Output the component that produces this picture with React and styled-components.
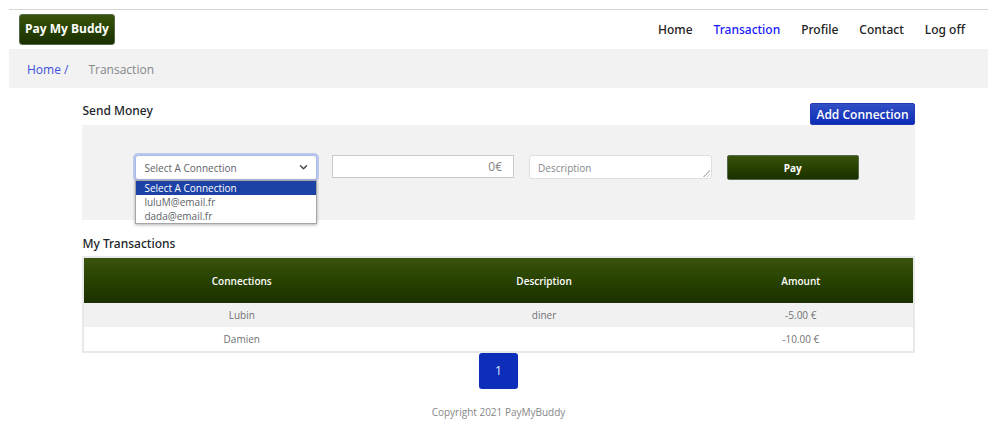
import React from "react";
import styled, { createGlobalStyle, css } from "styled-components";

const GlobalStyle = createGlobalStyle`
  *, *::before, *::after { box-sizing: border-box; }
  body {
    margin: 0;
    background: #fff;
    color: #212529;
    font-family: "Open Sans", "Noto Sans", sans-serif;
    font-size: 12px;
    line-height: 16px;
  }
  button, input, select, textarea { font: inherit; margin: 0; }
`;

const green = css`
  background: linear-gradient(#3a540e, #284200 48%, #1a3000);
  color: #fff;
`;

const Page = styled.div`
  margin: 9px 16px 0 9px;
  border-top: 1px solid #d6d6d6;
`;

const TopBar = styled.header`
  display: flex;
  align-items: center;
  justify-content: space-between;
  height: 39px;
  padding: 0 23px 0 10px;
`;

const Brand = styled.a`
  ${green}
  padding: 6px 5px 7px;
  border: 1px solid #53694a;
  border-radius: 3px;
  font-size: 12px;
  font-weight: 700;
  text-decoration: none;
`;

const NavLinks = styled.nav`
  display: flex;
  gap: 21px;
`;

const NavLink = styled.a`
  color: ${(p) => (p.$active ? "#1a1aff" : "#212121")};
  font-family: "Noto Sans", sans-serif;
  font-size: 12px;
  font-weight: 500;
  text-decoration: none;
`;

const Breadcrumb = styled.nav`
  display: flex;
  align-items: center;
  gap: 20px;
  height: 39px;
  padding: 2px 18px 0;
  background: #f2f2f2;
  color: #858789;
`;

const CrumbLink = styled.a`
  color: #3d51dc;
  text-decoration: none;
`;

const Container = styled.main`
  width: 85%;
  margin: 0 auto;
`;

const SectionHead = styled.div`
  display: flex;
  align-items: flex-start;
  justify-content: space-between;
  padding-top: 15px;
`;

const Title = styled.h2`
  margin: 0;
  font-family: "Noto Sans", sans-serif;
  font-size: 12px;
  line-height: 16px;
  font-weight: 500;
`;

const AddButton = styled.button`
  padding: 3px 5px 1px;
  border: 1px solid #2438b4;
  border-radius: 2px;
  background: linear-gradient(#3150c4, #0d2cb8);
  color: #fff;
  font-weight: 600;
`;

const PayForm = styled.form`
  display: grid;
  grid-template-columns: 181fr 181fr 182fr 131fr;
  gap: 15px;
  align-items: start;
  padding: 30px 56px 40px 53px;
  background: #f2f2f2;
`;

const SelectBox = styled.div`
  position: relative;
  color: #606468;
  font-size: 10px;

  svg {
    position: absolute;
    top: 9px;
    right: 9px;
    pointer-events: none;
  }
`;

const Select = styled.select`
  display: block;
  appearance: none;
  width: 100%;
  height: 25px;
  padding: 0 24px 0 8px;
  border: 1px solid #aab8e6;
  border-radius: 3px;
  outline: none;
  background: #fff;
  color: inherit;
  box-shadow: 0 0 0 2px #bcc7ec;
`;

const Options = styled.ul`
  position: absolute;
  z-index: 1;
  top: 100%;
  left: 0;
  right: 0;
  margin: 0;
  padding: 0;
  border: 1px solid #a6a6a6;
  background: #fff;
  box-shadow: 0 1px 3px rgba(0, 0, 0, 0.3);
  list-style: none;
`;

const Option = styled.li`
  padding: 0 8px;
  line-height: 14px;
  background: ${(p) => (p.$selected ? "#1d42a6" : "transparent")};
  color: ${(p) => (p.$selected ? "#fff" : "inherit")};
`;

const AmountInput = styled.input`
  width: 100%;
  height: 23px;
  padding: 0 11px;
  border: 1px solid #c9c9c9;
  border-radius: 0;
  background: #fff;
  color: #858585;
  font-size: 12px;
  text-align: right;
`;

const Description = styled.textarea`
  width: 100%;
  height: 24px;
  padding: 5px 8px 3px;
  border: 1px solid #dddfe3;
  border-radius: 3px;
  background: #fff;
  font-size: 10px;
  line-height: 14px;
  resize: vertical;
  overflow: hidden;

  &::placeholder { color: #85888c; }

  &::-webkit-resizer {
    background: linear-gradient(135deg, transparent 48%, #c4c4c4 48% 58%, transparent 58% 72%, #c4c4c4 72% 82%, transparent 82%) right 1px bottom 1px / 7px 7px no-repeat;
  }
`;

const PayButton = styled.button`
  ${green}
  height: 25px;
  border: 1px solid #53694a;
  border-radius: 2px;
  font-size: 10px;
  font-weight: 700;
`;

const TableTitle = styled(Title)`
  padding: 16px 0 4px;
`;

const Table = styled.table`
  width: 100%;
  border: 2px solid #e7e9ea;
  border-spacing: 0;
  table-layout: fixed;
  color: #707274;
  font-size: 10px;
  text-align: center;
`;

const HeadRow = styled.tr`
  ${green}
  height: 45px;
`;

const HeadCell = styled.th`
  width: ${(p) => p.$width};
  padding: 0;
  font-weight: 600;
`;

const Row = styled.tr`
  height: 24px;

  &:nth-child(odd) { background: #f1f1f1; }
`;

const Cell = styled.td`
  padding: 0;
`;

const Pagination = styled.nav`
  display: flex;
  justify-content: center;
`;

const PageLink = styled.a`
  width: 39px;
  border-radius: 3px;
  background: #0d2eb8;
  color: #e6eaff;
  line-height: 36px;
  text-align: center;
  text-decoration: none;
`;

const Footer = styled.footer`
  padding: 15px 0 8px;
  color: #858789;
  font-size: 10px;
  text-align: center;
`;

const links = ["Home", "Transaction", "Profile", "Contact", "Log off"];
const connections = ["Select A Connection", "luluM@email.fr", "dada@email.fr"];
const transactions = [
  { name: "Lubin", description: "diner", amount: "-5.00 €" },
  { name: "Damien", description: "", amount: "-10.00 €" },
];

export default function App() {
  return (
    <>
      <GlobalStyle />
      <Page>
        <TopBar>
          <Brand href="#">Pay My Buddy</Brand>
          <NavLinks>
            {links.map((l) => (
              <NavLink key={l} href="#" $active={l === "Transaction"}>{l}</NavLink>
            ))}
          </NavLinks>
        </TopBar>
        <Breadcrumb aria-label="Breadcrumb">
          <CrumbLink href="#">Home /</CrumbLink>
          <span>Transaction</span>
        </Breadcrumb>
        <Container>
          <SectionHead>
            <Title>Send Money</Title>
            <AddButton type="button">Add Connection</AddButton>
          </SectionHead>
          <PayForm onSubmit={(e) => e.preventDefault()}>
            <SelectBox>
              <Select aria-label="Connection">
                {connections.map((c) => <option key={c}>{c}</option>)}
              </Select>
              <svg width="9" height="7" viewBox="0 0 9 7" fill="none" stroke="#404448" strokeWidth="1.4" strokeLinecap="round" strokeLinejoin="round">
                <path d="M1.5 1.8 4.5 4.8 7.5 1.8" />
              </svg>
              <Options role="listbox" aria-label="Connections">
                {connections.map((c, i) => (
                  <Option key={c} role="option" aria-selected={i === 0} $selected={i === 0}>{c}</Option>
                ))}
              </Options>
            </SelectBox>
            <AmountInput aria-label="Amount" defaultValue="0€" />
            <Description aria-label="Description" placeholder="Description" rows={1} />
            <PayButton type="submit">Pay</PayButton>
          </PayForm>
          <TableTitle>My Transactions</TableTitle>
          <Table>
            <thead>
              <HeadRow>
                <HeadCell $width="38%">Connections</HeadCell>
                <HeadCell $width="35%">Description</HeadCell>
                <HeadCell $width="27%">Amount</HeadCell>
              </HeadRow>
            </thead>
            <tbody>
              {transactions.map((t) => (
                <Row key={t.name}>
                  <Cell>{t.name}</Cell>
                  <Cell>{t.description}</Cell>
                  <Cell>{t.amount}</Cell>
                </Row>
              ))}
            </tbody>
          </Table>
          <Pagination aria-label="Pages">
            <PageLink href="#">1</PageLink>
          </Pagination>
        </Container>
        <Footer>Copyright 2021 PayMyBuddy</Footer>
      </Page>
    </>
  );
}
